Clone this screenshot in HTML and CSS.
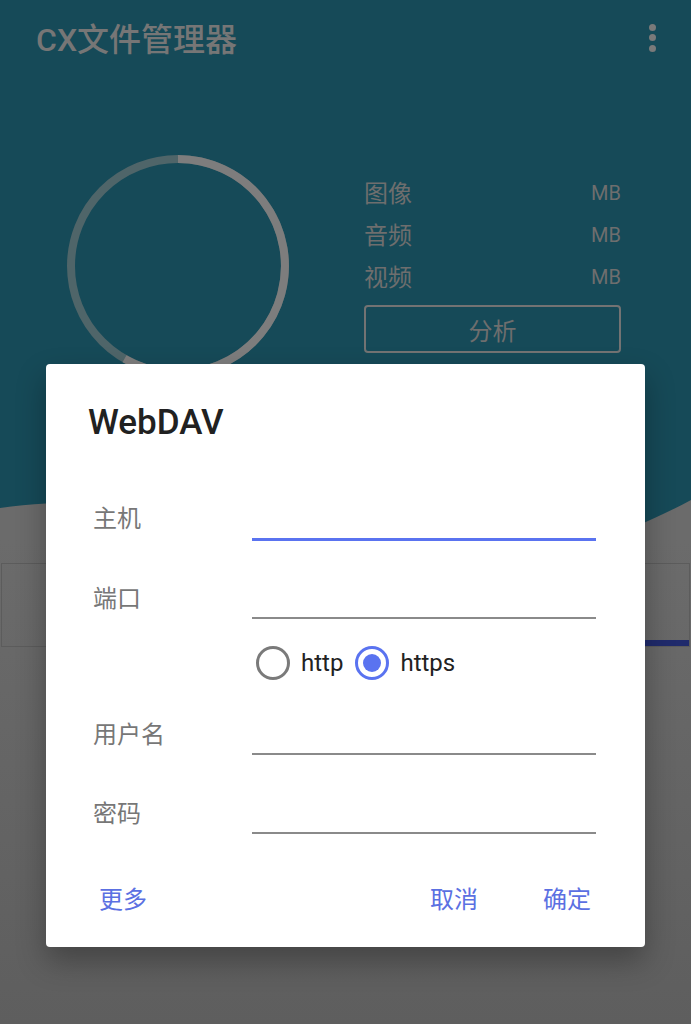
FILE: index.html
```html
<!DOCTYPE html>
<html lang="zh-CN">
<head>
<meta charset="utf-8">
<title>CX文件管理器</title>
<link rel="stylesheet" href="styles.css">
</head>
<body>
<div class="app">
  <header class="hero">
    <div class="appbar">
      <h1 class="app-title">CX文件管理器</h1>
      <div class="more" aria-label="more"><span></span><span></span><span></span></div>
    </div>
    <div class="stats">
      <svg class="ring" width="222" height="222" viewBox="0 0 222 222">
        <circle cx="111" cy="111" r="107" fill="none" stroke="#4f6569" stroke-width="8"/>
        <path d="M111 4 A107 107 0 1 1 57.5 203.7" fill="none" stroke="#7d7d7d" stroke-width="8"/>
      </svg>
      <div class="legend">
        <div class="legend-row"><span>图像</span><span class="mb">MB</span></div>
        <div class="legend-row"><span>音频</span><span class="mb">MB</span></div>
        <div class="legend-row"><span>视频</span><span class="mb">MB</span></div>
        <div class="analyze">分析</div>
      </div>
    </div>
  </header>
  <svg class="wave" width="691" height="60" viewBox="0 0 691 60" preserveAspectRatio="none">
    <rect x="0" y="0" width="691" height="60" fill="#6b6b6b"/>
    <path d="M0 0 H691 V20 C560 90 480 80 480 80 C480 80 200 0 0 28 Z" fill="#164a58"/>
  </svg>
  <section class="lower">
    <div class="card">
      <div class="indicator"></div>
    </div>
  </section>
</div>

<div class="dialog">
  <h2 class="dialog-title">WebDAV</h2>
  <div class="field field-first">
    <label class="field-label">主机</label>
    <input class="field-input focused" type="text">
  </div>
  <div class="field field-port">
    <label class="field-label">端口</label>
    <input class="field-input" type="text">
  </div>
  <div class="radios">
    <svg class="radio" width="36" height="36" viewBox="0 0 36 36"><circle cx="18" cy="18" r="15.5" fill="none" stroke="#7a7a7a" stroke-width="3"/></svg>
    <span class="radio-text">http</span>
    <svg class="radio radio-second" width="36" height="36" viewBox="0 0 36 36"><circle cx="18" cy="18" r="15.5" fill="none" stroke="#5a73f0" stroke-width="3"/><circle cx="18" cy="18" r="9" fill="#5a73f0"/></svg>
    <span class="radio-text">https</span>
  </div>
  <div class="field field-user">
    <label class="field-label">用户名</label>
    <input class="field-input" type="text">
  </div>
  <div class="field field-pass">
    <label class="field-label">密码</label>
    <input class="field-input" type="password">
  </div>
  <div class="actions">
    <span class="btn">更多</span>
    <span class="spacer"></span>
    <span class="btn">取消</span>
    <span class="btn btn-ok">确定</span>
  </div>
</div>
</body>
</html>
```
FILE: styles.css
```css
* { box-sizing: border-box; }
html, body {
  margin: 0;
  padding: 0;
}
body {
  width: 691px;
  height: 1024px;
  overflow: hidden;
  background: #5f5f5f;
  font-family: Roboto, "Noto Sans CJK SC", sans-serif;
  position: relative;
}
.app {
  width: 691px;
  height: 1024px;
  display: flex;
  flex-direction: column;
}
.hero {
  background: #164a58;
  height: 480px;
  flex: none;
}
.appbar {
  height: 80px;
  display: flex;
  align-items: center;
  justify-content: space-between;
  padding: 0 36px 0 36px;
}
.app-title {
  margin: 0;
  font-size: 32px;
  font-weight: 500;
  color: #767676;
  font-family: Roboto, "Noto Sans CJK SC", sans-serif;
  letter-spacing: 0;
  position: relative;
  top: -3px;
}
.more {
  display: flex;
  flex-direction: column;
  gap: 3.5px;
  margin-right: -1px;
  margin-top: -5px;
}
.more span {
  width: 7px;
  height: 7px;
  border-radius: 50%;
  background: #7a7a7a;
}
.stats {
  display: flex;
  padding-top: 75px;
}
.ring {
  margin-left: 67px;
  flex: none;
}
.legend {
  margin-left: 75px;
  width: 257px;
  padding-top: 15px;
  font-family: "Noto Sans CJK SC", sans-serif;
  color: #6e6e6e;
}
.legend-row {
  height: 42px;
  display: flex;
  justify-content: space-between;
  align-items: center;
  font-size: 24px;
}
.legend-row .mb {
  font-family: Roboto, sans-serif;
  font-size: 20px;
  position: relative;
  top: 2px;
}
.analyze {
  margin-top: 9px;
  height: 48px;
  border: 2px solid #737373;
  border-radius: 4px;
  display: flex;
  align-items: center;
  justify-content: center;
  font-size: 24px;
  color: #6e6e6e;
}
.wave {
  display: block;
  flex: none;
}
.lower {
  flex: 1;
  background: linear-gradient(#6b6b6b, #5e5e5e);
  padding-top: 23px;
}
.card {
  height: 84px;
  margin: 0 1px;
  border: 1px solid #5c5c5c;
  display: flex;
  flex-direction: column;
  justify-content: flex-end;
}
.indicator {
  width: 50%;
  margin-left: auto;
  height: 6px;
  background: #202b6c;
}

/* dialog overlay */
.dialog {
  position: absolute;
  left: 46px;
  top: 364px;
  width: 599px;
  height: 583px;
  background: #ffffff;
  border-radius: 4px;
  box-shadow: 0 14px 30px rgba(0, 0, 0, 0.3);
  display: flex;
  flex-direction: column;
}
.dialog-title {
  margin: 39px 0 0 42px;
  height: 40px;
  line-height: 40px;
  font-size: 35px;
  font-weight: 500;
  color: #212121;
  font-family: Roboto, sans-serif;
}
.field {
  display: grid;
  grid-template-columns: 159px 344px;
  align-items: end;
  padding-left: 47px;
}
.field-first { margin-top: 19px; height: 79px; }
.field-port { height: 78px; }
.field-user { height: 74px; }
.field-pass { height: 79px; }
.field-label {
  font-family: "Noto Sans CJK SC", sans-serif;
  font-size: 24px;
  line-height: 44px;
  color: #777777;
}
.field-first .field-label { margin-bottom: 2px; }
.field-input {
  display: block;
  width: 344px;
  height: 44px;
  border: none;
  border-bottom: 2px solid #8a8a8a;
  outline: none;
  background: transparent;
  padding: 0;
  margin: 0;
  font-size: 22px;
}
.field-input.focused {
  border-bottom: 3px solid #5a73f0;
}
.radios {
  display: flex;
  align-items: center;
  margin-top: 26px;
  height: 36px;
  padding-left: 209px;
}
.radio { display: block; flex: none; }
.radio-second { margin-left: 11px; }
.radio-text {
  margin-left: 10px;
  font-size: 24px;
  color: #222222;
  font-family: Roboto, sans-serif;
}
.actions {
  display: flex;
  align-items: center;
  height: 44px;
  margin-top: 42px;
  padding: 0 54px 0 53px;
}
.spacer { flex: 1; }
.btn {
  font-family: "Noto Sans CJK SC", sans-serif;
  font-size: 24px;
  line-height: 44px;
  color: #5b70e2;
}
.btn-ok { margin-left: 65px; }
```
